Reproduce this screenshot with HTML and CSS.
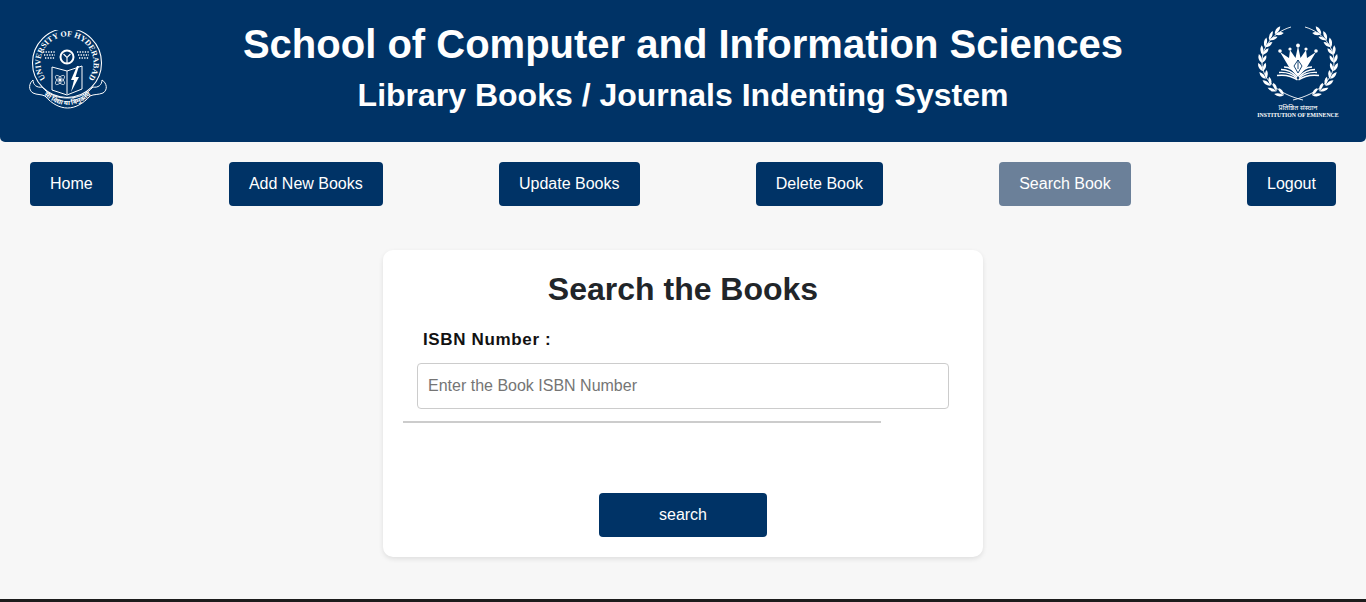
FILE: index.html
```html
<!DOCTYPE html>
<html lang="en">
<head>
    <meta charset="UTF-8">
    <title>Search Book</title>
    <link rel="stylesheet" href="styles.css">
</head>
<body>
    <header class="banner">
        <svg class="logo-uoh" viewBox="0 0 80 80" fill="none" stroke="#fff">
            <defs>
                <path id="ringText" d="M20.300 51.700 A26.500 26.500 0 1 1 57.700 51.700"/>
                <path id="ribbonText" d="M14 63 C22 71 31 75 39.500 75 C48 75 57 71 65 63"/>
            </defs>
            <circle cx="39" cy="33" r="34.500" stroke-width="1.100"/>
            <text class="ring-text" fill="#fff" stroke="none"><textPath href="#ringText" startOffset="50%" text-anchor="middle">UNIVERSITY OF HYDERABAD</textPath></text>
            <!-- wheel and braille dots -->
            <circle cx="39" cy="27" r="6.500" stroke-width="2"/>
            <path d="M35.500 24 L39 27.500 L42.500 24 M39 27.500 V33" stroke-width="1.100"/>
            <path d="M15 22h13M16 25h11M17 28h10M49 22h13M50 25h11M51 28h10" stroke-width="1.300" stroke-dasharray="1.300 1.300"/>
            <!-- book -->
            <path d="M24 37 L39 41 L54 36 V59 L39 65 L24 60 Z" stroke-width="1"/>
            <path d="M39 41 V64" stroke-width="1"/>
            <circle cx="32" cy="50" r="1.700" fill="#fff" stroke="none"/>
            <ellipse cx="32" cy="50" rx="6" ry="2.500" stroke-width=".7" transform="rotate(45 32 50)"/>
            <ellipse cx="32" cy="50" rx="6" ry="2.500" stroke-width=".7" transform="rotate(-45 32 50)"/>
            <path d="M49 36 L43 50 H46 L43 62 L51 47 H47.500 L51 36 Z" fill="#fff" stroke="none"/>
            <!-- ribbon -->
            <path d="M5 50 C1 53 0 60 5 63 C9 65 13 64 17 66 C24 74 32 78 39.500 78 C47 78 55 74 62 66 C66 64 70 65 75 63 C80 60 79 53 74 50 C74 55 70 58 65 57 C58 65 50 68 39.500 68 C29 68 21 65 14 57 C9 58 5 55 5 50 Z" fill="#003366" stroke-width="1"/>
            <text class="ribbon-text" fill="#fff" stroke="none"><textPath href="#ribbonText" startOffset="50%" text-anchor="middle">सा विद्या या विमुक्तये</textPath></text>
        </svg>

        <div class="banner-titles">
            <h1>School of Computer and Information Sciences</h1>
            <h2>Library Books / Journals Indenting System</h2>
        </div>

        <svg class="logo-ioe" viewBox="0 0 84 96" fill="none" stroke="#fff">
            <defs>
                <g id="leafPair" fill="#fff" stroke="none">
                    <path d="M6 41 Q1 38 2.500 32 Q6.500 35 6 41 Z"/>
                    <path d="M6 41 Q11 38 10 33 Q6 35 6 41 Z"/>
                </g>
                <g id="wreathSide">
                    <path d="M35 3 C18 8 6 22 6 38 C6 56 22 70 47 76" stroke-width=".9"/>
                    <use href="#leafPair" transform="rotate(-62 42 38)"/>
                    <use href="#leafPair" transform="rotate(-49 42 38)"/>
                    <use href="#leafPair" transform="rotate(-36 42 38)"/>
                    <use href="#leafPair" transform="rotate(-23 42 38)"/>
                    <use href="#leafPair" transform="rotate(-10 42 38)"/>
                    <use href="#leafPair" transform="rotate(3 42 38)"/>
                    <use href="#leafPair" transform="rotate(16 42 38)"/>
                    <use href="#leafPair" transform="rotate(29 42 38)"/>
                    <use href="#leafPair" transform="rotate(42 42 38)"/>
                    <use href="#leafPair" transform="rotate(55 42 38)"/>
                </g>
            </defs>
            <use href="#wreathSide"/>
            <use href="#wreathSide" transform="matrix(-1 0 0 1 84 0)"/>
            <!-- crown and nib -->
            <path d="M24 28 L33 34 L34 26 L39.500 34 L42 22 L44.500 34 L50 26 L51 34 L60 28 L51 43 L42 53 L33 43 Z" fill="#fff" stroke="none"/>
            <circle cx="42" cy="21.500" r="1.900" fill="#fff" stroke="none"/>
            <circle cx="34" cy="25" r="1.600" fill="#fff" stroke="none"/>
            <circle cx="50" cy="25" r="1.600" fill="#fff" stroke="none"/>
            <circle cx="24" cy="27" r="1.800" fill="#fff" stroke="none"/>
            <circle cx="60" cy="27" r="1.800" fill="#fff" stroke="none"/>
            <path d="M42 36 V45 M38 42 L42 36 L46 42 L42 49 Z" stroke="#003366" stroke-width=".9"/>
            <!-- open book -->
            <g stroke-width="1.400">
                <path d="M28 43 C33 43 38 46 41 51"/>
                <path d="M25 45.500 C31 45.500 37 48.500 41 53"/>
                <path d="M23 48.500 C30 48 37 50.500 41 54.500"/>
                <path d="M21 51.500 C29 50.500 36 52 41.500 56"/>
                <path d="M56 43 C51 43 46 46 43 51"/>
                <path d="M59 45.500 C53 45.500 47 48.500 43 53"/>
                <path d="M61 48.500 C54 48 47 50.500 43 54.500"/>
                <path d="M63 51.500 C55 50.500 48 52 42.500 56"/>
            </g>
            <text class="ioe-hindi" x="42" y="86" fill="#fff" stroke="none" text-anchor="middle">प्रतिष्ठित संस्थान</text>
            <text class="ioe-text" x="42" y="93" fill="#fff" stroke="none" text-anchor="middle">INSTITUTION OF EMINENCE</text>
        </svg>
    </header>

    <nav class="nav-row">
        <a class="nav-btn" href="#">Home</a>
        <a class="nav-btn" href="#">Add New Books</a>
        <a class="nav-btn" href="#">Update Books</a>
        <a class="nav-btn" href="#">Delete Book</a>
        <a class="nav-btn active" href="#">Search Book</a>
        <a class="nav-btn" href="#">Logout</a>
    </nav>

    <main class="card">
        <h3>Search the Books</h3>
        <label class="field-label" for="isbn">ISBN Number :</label>
        <input class="field-input" id="isbn" type="text" placeholder="Enter the Book ISBN Number">
        <hr class="divider">
        <button class="search-btn" type="button">search</button>
    </main>

    <footer class="bottom-bar"></footer>
</body>
</html>
```

FILE: styles.css
```css
*{
    box-sizing: border-box;
}
body{
    margin: 0;
    height: 602px;
    overflow: hidden;
    background: #f7f7f7;
    font-family: "Liberation Sans", Arial, sans-serif;
    display: flex;
    flex-direction: column;
}
.banner{
    height: 142px;
    background: #003366;
    color: #fff;
    border-radius: 0 0 5px 5px;
    display: flex;
    justify-content: space-between;
    align-items: center;
    padding: 0 26px 0 28px;
}
.logo-uoh{
    width: 80px;
    height: 80px;
    margin: -2px 2px 0 0;
}
.logo-ioe{
    width: 84px;
    height: 96px;
    margin-top: 2px;
}
.ring-text{
    font: bold 8px "Liberation Serif", serif;
}
.ribbon-text{
    font: bold 6.500px "Noto Sans", sans-serif;
}
.ioe-hindi{
    font: 7px "Noto Sans", sans-serif;
}
.ioe-text{
    font: bold 5.800px "Liberation Serif", serif;
}
.banner-titles{
    text-align: center;
    margin-bottom: 7px;
}
.banner-titles h1{
    margin: 0;
    font-size: 40px;
    line-height: 46px;
}
.banner-titles h2{
    margin: 10px 0 0;
    font-size: 32px;
    line-height: 37px;
}
.nav-row{
    display: flex;
    justify-content: space-between;
    padding: 20px 30px 0;
}
.nav-btn{
    height: 44px;
    padding: 0 20px;
    background: #003366;
    color: #fff;
    border-radius: 4px;
    font-size: 16px;
    line-height: 43px;
    text-decoration: none;
}
.nav-btn.active{
    background: #6b8099;
}
.card{
    width: 600px;
    height: 307px;
    margin: 44px auto 0;
    padding: 20px 20px 0;
    background: #fff;
    border-radius: 10px;
    box-shadow: 0 2px 5px rgba(0, 0, 0, .1);
    display: flex;
    flex-direction: column;
}
.card h3{
    margin: 1px 0 0;
    font-size: 32px;
    line-height: 37px;
    text-align: center;
    color: #212529;
}
.field-label{
    margin: 22px 0 0 20px;
    font-size: 17px;
    line-height: 20px;
    font-weight: bold;
    letter-spacing: .65px;
    color: #111;
}
.field-input{
    width: 532px;
    height: 46px;
    margin: 13px 0 0 14px;
    padding: 0 10px;
    border: 1px solid #ccc;
    border-radius: 4px;
    font: 16px "Liberation Sans", Arial, sans-serif;
}
.divider{
    width: 478px;
    height: 2px;
    margin: 12px 0 0;
    border: none;
    background: #ccc;
}
.search-btn{
    width: 168px;
    height: 44px;
    margin: 70px auto 0;
    border: none;
    border-radius: 4px;
    background: #003366;
    color: #fff;
    font: 16px "Liberation Sans", Arial, sans-serif;
}
.bottom-bar{
    height: 3px;
    margin-top: auto;
    background: #1c1c1c;
}
```
